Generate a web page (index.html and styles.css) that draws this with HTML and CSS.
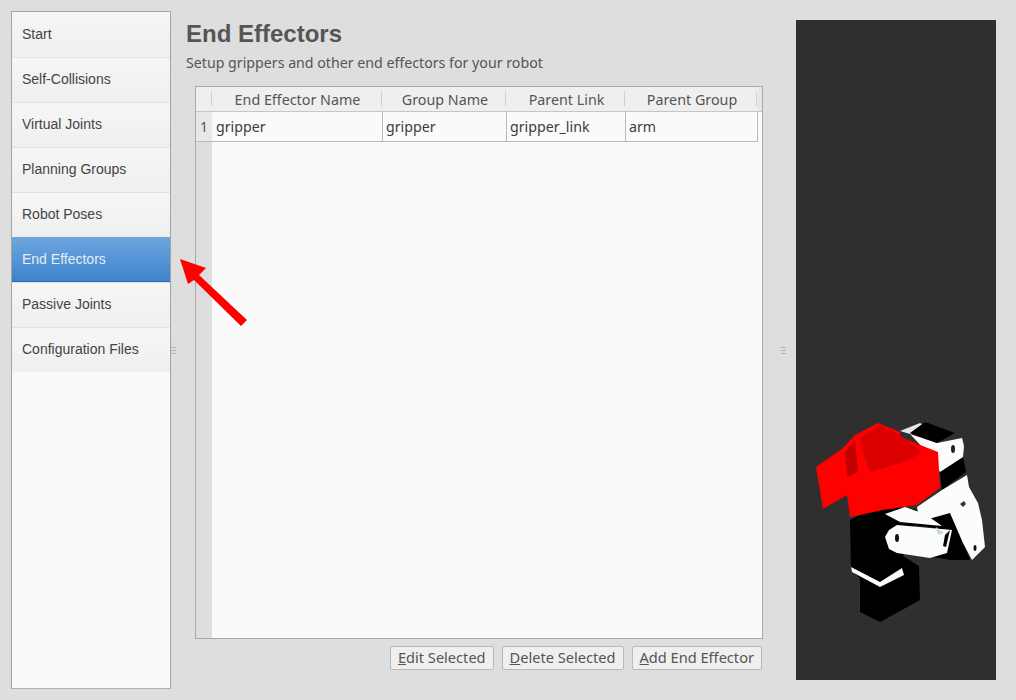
FILE: index.html
```html
<!DOCTYPE html>
<html>
<head>
    <title>End Effectors</title>
    <link rel="stylesheet" href="styles.css">
</head>
<body>
    <nav class="sidebar">
        <div class="nav-item">Start</div>
        <div class="nav-item">Self-Collisions</div>
        <div class="nav-item">Virtual Joints</div>
        <div class="nav-item">Planning Groups</div>
        <div class="nav-item">Robot Poses</div>
        <div class="nav-item selected">End Effectors</div>
        <div class="nav-item">Passive Joints</div>
        <div class="nav-item">Configuration Files</div>
    </nav>

    <main class="content">
        <h1>End Effectors</h1>
        <p class="subtitle">Setup grippers and other end effectors for your robot</p>

        <div class="table">
            <div class="corner"></div>
            <div class="head">End Effector Name</div>
            <div class="head">Group Name</div>
            <div class="head">Parent Link</div>
            <div class="head">Parent Group</div>
            <div class="head-end"></div>

            <div class="row-num">1</div>
            <div class="cell">gripper</div>
            <div class="cell">gripper</div>
            <div class="cell">gripper_link</div>
            <div class="cell">arm</div>
            <div class="row-end"></div>

            <div class="gutter"></div>
            <div class="empty"></div>
        </div>

        <div class="buttons">
            <button><u>E</u>dit Selected</button>
            <button><u>D</u>elete Selected</button>
            <button><u>A</u>dd End Effector</button>
        </div>
    </main>

    <div class="viewer">
        <svg class="robot" viewBox="796 20 200 660">
            <!-- black parts -->
            <polygon fill="#000" points="850,520 880,505 920,510 903,556 919,566 920,600 880,622 860,612 860,578 851,570"/>
            <polygon fill="#000" points="920,513 950,513 963,543 970,560 950,560 933,557 950,530 897,523"/>
            <polygon fill="#000" points="940,472 963,457 966,472 942,490"/>
            <!-- white parts -->
            <polygon fill="#e3e8e3" points="900,431 920,423 925,426 910,434"/>
            <polygon fill="#fbfdfb" points="910,434 937,443 962,438 964,446 963,457 940,472 925,450"/>
            <polygon fill="#000" points="910,433 925,422 955,433 937,443"/>
            <polygon fill="#fbfdfb" points="917,507 942,490 967,475 969,487 978,503 982,520 985,547 972,560 963,543 950,513 925,520 919,519"/>
            <polygon fill="#fbfdfb" points="885,537 889,530 897,525 952,530 947,553 930,558 897,553 889,549"/>
            <polygon fill="#fbfdfb" points="885,514 905,507 925,514 942,526 900,522"/>
            <polygon fill="#fbfdfb" points="851,567 880,582 902,568 904,575 880,587 852,572"/>
            <polygon fill="#cfd6cf" points="936,527 944,533 938,535"/>
            <polygon fill="#000" points="945,535 950,530 946,547 943,546"/>
            <ellipse cx="953" cy="449" rx="2" ry="4" fill="#222"/>
            <ellipse cx="897" cy="538" rx="2" ry="4" fill="#111"/>
            <ellipse cx="975" cy="548" rx="1.5" ry="3" fill="#111"/>
            <polygon fill="#333" points="960,504 964,501 966,504 963,507"/>
            <!-- red gripper -->
            <polygon fill="#f00" points="816,467 843,448 855,435 878,423 900,432 900,437 938,452 940,488 917,505 883,510 850,517 847,495 823,509"/>
            <polygon fill="#dc0000" points="860,438 880,425 900,435 922,452 910,460 870,472 863,453"/>
            <polygon fill="#c20000" points="845,452 855,440 858,472 847,477"/>
        </svg>
    </div>

    <span class="handle handle-left"></span>
    <span class="handle handle-right"></span>

    <svg class="arrow" viewBox="0 0 70 70">
        <polygon fill="#f00" points="0,0 26,9 19,16 67,61 61,67 14,21 8,25"/>
    </svg>
</body>
</html>
```
FILE: styles.css
```css
html, body {
    height: 100%;
}
body {
    box-sizing: border-box;
    margin: 0;
    padding: 11px 20px 11px 11px;
    display: flex;
    background: #dedede;
    color: #4a4a4a;
    font-family: "Noto Sans", sans-serif;
    overflow: hidden;
}
.sidebar {
    box-sizing: border-box;
    width: 160px;
    flex: none;
    background: #fafafa;
    border: 1px solid #a3a3a3;
    border-bottom-color: #b0b0b0;
}
.nav-item {
    box-sizing: border-box;
    height: 45px;
    padding: 0 10px 2px;
    display: flex;
    align-items: center;
    background: linear-gradient(#f6f6f6, #efefef);
    border-top: 1px solid #e2e2e2;
    font-family: "Liberation Sans", sans-serif;
    font-size: 14px;
    color: #444;
}
.nav-item:first-child {
    border-top: none;
}
.nav-item.selected {
    padding-bottom: 0;
    background: linear-gradient(#6fa6de, #3d83cd);
    border-top: none;
    border-bottom: 1px solid #2a69ad;
    color: #e6edf5;
}
.content {
    flex: 1;
    min-width: 0;
    display: flex;
    flex-direction: column;
    padding: 0 33px 0 15px;
}
h1 {
    margin: 8px 0 0;
    font-family: "Liberation Sans", sans-serif;
    font-size: 24px;
    line-height: 30px;
    font-weight: bold;
    color: #555;
}
.subtitle {
    margin: 4px 0 0;
    font-size: 14.2px;
    line-height: 20px;
    color: #555;
}
.table {
    flex: 1;
    margin: 13px 0 0 9px;
    display: grid;
    grid-template-columns: 16px 171px 124px 119px 132px 1fr;
    grid-template-rows: 25px 30px 1fr;
    background: #fafafa;
    border: 1px solid #a9a9a9;
    font-size: 14.2px;
}
.corner, .head, .head-end {
    background: #efefef;
    border-bottom: 1px solid #c6c6c6;
}
.corner, .head {
    position: relative;
}
.corner::after, .head::after {
    content: "";
    position: absolute;
    right: 0;
    top: 4px;
    bottom: 5px;
    width: 1px;
    background: #cfcfcf;
}
.head::after {
    right: 1px;
}
.head {
    text-align: center;
    line-height: 26px;
    font-size: 14.3px;
    color: #555;
}
.head-end {
    background: #e6e6e6;
}
.row-num {
    background: #e8e8e8;
    border-bottom: 1px solid #b9b9b9;
    text-align: right;
    padding-right: 4px;
    line-height: 29px;
    font-size: 14px;
    color: #555;
}
.cell {
    padding-left: 4px;
    background: #fafafa;
    border-right: 1px solid #b9b9b9;
    border-bottom: 1px solid #b9b9b9;
    line-height: 29px;
    color: #3c3c3c;
}
.cell + .cell {
    padding-left: 3px;
}
.gutter {
    background: #dedede;
}
.empty {
    grid-column: 2 / -1;
}
.buttons {
    display: flex;
    justify-content: flex-end;
    gap: 8px;
    margin: 7px 1px 19px 0;
}
button {
    box-sizing: border-box;
    height: 24px;
    padding: 0 7px 2px;
    background: #efefef;
    border: 1px solid #b9b9b9;
    border-radius: 2px;
    font-family: "Noto Sans", sans-serif;
    font-size: 14.6px;
    color: #555;
}
.viewer {
    width: 200px;
    flex: none;
    margin: 9px 0;
    background: #2f2f2f;
}
.robot {
    display: block;
    width: 200px;
    height: 660px;
}
.handle {
    position: absolute;
    top: 347px;
    width: 5px;
    height: 7px;
    background: repeating-linear-gradient(#b4b4b4 0, #b4b4b4 1px, transparent 1px, transparent 3px);
}
.handle-left {
    left: 171px;
}
.handle-right {
    left: 781px;
}
.arrow {
    position: absolute;
    left: 180px;
    top: 259px;
    width: 70px;
    height: 70px;
}
```
